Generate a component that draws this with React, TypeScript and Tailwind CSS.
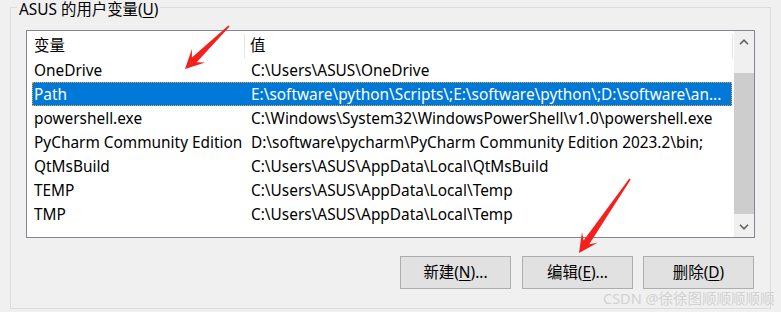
import React from 'react';

interface EnvVar {
  name: string;
  value: string;
}

// Path is shown clipped by the list view, exactly as Windows draws it
const vars: EnvVar[] = [
  { name: 'OneDrive', value: 'C:\\Users\\ASUS\\OneDrive' },
  { name: 'Path', value: 'E:\\software\\python\\Scripts\\;E:\\software\\python\\;D:\\software\\an...' },
  { name: 'powershell.exe', value: 'C:\\Windows\\System32\\WindowsPowerShell\\v1.0\\powershell.exe' },
  { name: 'PyCharm Community Edition', value: 'D:\\software\\pycharm\\PyCharm Community Edition 2023.2\\bin;' },
  { name: 'QtMsBuild', value: 'C:\\Users\\ASUS\\AppData\\Local\\QtMsBuild' },
  { name: 'TEMP', value: 'C:\\Users\\ASUS\\AppData\\Local\\Temp' },
  { name: 'TMP', value: 'C:\\Users\\ASUS\\AppData\\Local\\Temp' },
];

type Pt = [number, number];

// tapered red annotation arrow, tail -> tip
function arrowPoints(tail: Pt, tip: Pt, headLen = 19, headHalf = 9.5, neck = 13, shaftTail = 0.8, shaftHead = 3.4) {
  const dx = tip[0] - tail[0];
  const dy = tip[1] - tail[1];
  const len = Math.hypot(dx, dy);
  const ux = dx / len, uy = dy / len;
  const nx = -uy, ny = ux;
  const at = (d: number, off: number): Pt => [tail[0] + ux * d + nx * off, tail[1] + uy * d + ny * off];
  const pts: Pt[] = [
    at(0, shaftTail),
    at(len - neck, shaftHead),
    at(len - headLen, headHalf),
    tip,
    at(len - headLen, -headHalf),
    at(len - neck, -shaftHead),
    at(0, -shaftTail),
  ];
  return pts.map(p => `${p[0].toFixed(1)},${p[1].toFixed(1)}`).join(' ');
}

const Btn: React.FC<{ label: string; hot: string; suffix: string; className?: string }> = ({ label, hot, suffix, className }) => (
  <button className={`w-[111px] h-[33px] bg-[#e1e1e1] border border-[#adadad] flex items-center justify-center ${className ?? ''}`}>
    {label}(<span className="underline underline-offset-2">{hot}</span>){suffix}
  </button>
);

export default function App() {
  return (
    <div
      className="relative w-[781px] h-[312px] overflow-hidden bg-[#f0f0f0] text-[15.4px] text-black"
      style={{ fontFamily: '"Noto Sans", "Noto Sans CJK SC", sans-serif' }}
    >
      <div className="pt-[7px] pl-[10px]">
        <div className="relative w-[761px] h-[302px] border border-[#dcdcdc] px-[15px] pt-[22px]">
          <span className="absolute left-[6px] -top-[7px] bg-[#f0f0f0] px-[2px] leading-[17px]">
            ASUS 的用户变量(<span className="underline underline-offset-2">U</span>)
          </span>

          {/* list view */}
          <div className="w-[729px] h-[208px] border border-[#828790] bg-white flex">
            <div className="w-[706px] flex flex-col">
              <div className="h-[27px] flex pt-[3px] items-center">
                <div className="ml-[5px] w-[213px] pl-[2px] h-full flex items-center border-r border-[#e5e5e5]">变量</div>
                <div className="flex-1 pl-[5px] h-full flex items-center border-r border-[#e5e5e5]">值</div>
              </div>
              {vars.map((v, i) => {
                const sel = v.name === 'Path';
                return (
                  <div
                    key={i}
                    className={`ml-[5px] w-[700px] h-[24px] pt-[2px] flex items-center whitespace-nowrap ${sel ? 'bg-[#0078d7] text-white outline-1 outline-dotted outline-[#f2a33a] -outline-offset-1' : ''}`}
                  >
                    <div className="w-[213px] shrink-0 pl-[2px]">{v.name}</div>
                    <div className="flex-1 min-w-0 pl-[6px]">{v.value}</div>
                  </div>
                );
              })}
            </div>

            {/* scrollbar */}
            <div className="w-[20px] ml-[1px] bg-[#f0f0f0] flex flex-col">
              <div className="h-[21px] flex items-center justify-center">
                <svg width="10" height="6" viewBox="0 0 10 6">
                  <path d="M1 5.2 L5 1.2 L9 5.2" fill="none" stroke="#606060" strokeWidth="1.6" />
                </svg>
              </div>
              <div className="h-[21px]" />
              <div className="h-[141px] bg-[#cdcdcd]" />
              <div className="flex-1" />
              <div className="h-[21px] flex items-center justify-center">
                <svg width="10" height="6" viewBox="0 0 10 6">
                  <path d="M1 0.8 L5 4.8 L9 0.8" fill="none" stroke="#606060" strokeWidth="1.6" />
                </svg>
              </div>
            </div>
          </div>

          {/* buttons */}
          <div className="mt-[18px] flex justify-end pr-[1px]">
            <Btn label="新建" hot="N" suffix="..." />
            <Btn label="编辑" hot="E" suffix="..." className="ml-[11px]" />
            <Btn label="删除" hot="D" suffix="" className="ml-[10px]" />
          </div>
        </div>
      </div>

      <div className="absolute left-[603px] top-[288px] text-[14.5px] text-[#d2d2d2] whitespace-nowrap leading-[20px]">
        CSDN @徐徐图顺顺顺顺顺
      </div>

      <svg className="absolute left-0 top-0 pointer-events-none" width="781" height="312">
        <polygon points={arrowPoints([229, 26], [185, 69])} fill="#f5201c" />
        <polygon points={arrowPoints([630, 179], [579, 253])} fill="#f5201c" />
      </svg>
    </div>
  );
}
